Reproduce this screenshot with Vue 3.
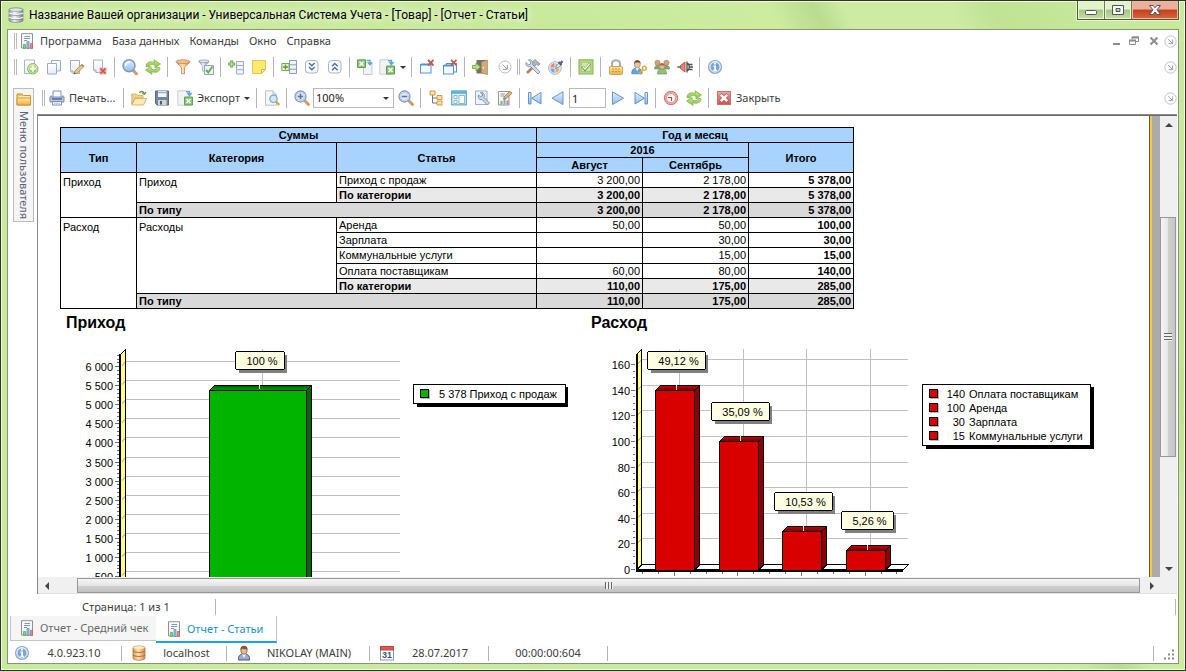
<script setup>
import { ref } from 'vue'

const menu = ['Программа', 'База данных', 'Команды', 'Окно', 'Справка']

const mainTools = [
  'add', 'copy', 'edit', 'delete', '|', 'search', 'refresh', '|', 'funnel', 'funnelCheck', '|',
  'addField', 'note', '|', 'expand', 'down', 'up', '|', 'excel', 'export+', '|',
  'closeWin', 'closeAll', '|', 'exit', 'more', '||', 'tools', 'palette', '|', 'check', '|',
  'lock', 'userKey', 'users', 'plug', '|', 'info'
]

const zoom = ref('100%')
const page = ref('1')

const rows = [
  { type: 'Приход', typeSpan: 3, cat: 'Приход', catSpan: 2, name: 'Приход с продаж', v: ['3 200,00', '2 178,00', '5 378,00'] },
  { sub: true, name: 'По категории', v: ['3 200,00', '2 178,00', '5 378,00'] },
  { total: true, name: 'По типу', v: ['3 200,00', '2 178,00', '5 378,00'] },
  { type: 'Расход', typeSpan: 6, cat: 'Расходы', catSpan: 5, name: 'Аренда', v: ['50,00', '50,00', '100,00'] },
  { name: 'Зарплата', v: ['', '30,00', '30,00'] },
  { tall: true, name: 'Коммунальные услуги', v: ['', '15,00', '15,00'] },
  { name: 'Оплата поставщикам', v: ['60,00', '80,00', '140,00'] },
  { sub: true, name: 'По категории', v: ['110,00', '175,00', '285,00'] },
  { total: true, name: 'По типу', v: ['110,00', '175,00', '285,00'] }
]

const half = (n) => Math.floor(n) + 0.5

const incomeTicks = Array.from({ length: 12 }, (_, i) => {
  const value = 6000 - i * 500
  return { y: half(32.6 + i * 19.08), label: value >= 1000 ? `${value / 1000 | 0} ${String(value % 1000).padStart(3, '0')}` : String(value) }
})
const incomeMinor = Array.from({ length: 60 }, (_, i) => half(21.2 + i * 3.816))

const expenseTicks = Array.from({ length: 9 }, (_, i) => ({ y: half(30.7 + i * 25.6), label: String(160 - i * 20) }))
const expenseMinor = Array.from({ length: 33 }, (_, i) => half(30.7 + i * 6.4))
const expenseBars = [
  { x: 70.5, y: 56.5, tagX: 62.5, tagY: 17.5, tagW: 58, label: '49,12 %' },
  { x: 134.5, y: 107.5, tagX: 126.5, tagY: 68.5, tagW: 58, label: '35,09 %' },
  { x: 197.5, y: 197.5, tagX: 189.5, tagY: 158.5, tagW: 58, label: '10,53 %' },
  { x: 261.5, y: 216.5, tagX: 256.5, tagY: 177.5, tagW: 52, label: '5,26 %' }
]
const floorTicks = Array.from({ length: 17 }, (_, i) => ({ x: half(57.5 + i * 15.9), major: i % 4 === 2 }))
const expenseLegend = [
  { value: '140', name: 'Оплата поставщикам' },
  { value: '100', name: 'Аренда' },
  { value: '30', name: 'Зарплата' },
  { value: '15', name: 'Коммунальные услуги' }
]
</script>

<template>
  <div class="window">
    <svg class="defs" width="0" height="0" aria-hidden="true">
      <defs>
        <linearGradient id="gGreen" x1="0" y1="0" x2="0" y2="1"><stop offset="0" stop-color="#c9e98c" /><stop offset="1" stop-color="#86c244" /></linearGradient>
        <linearGradient id="gBlue" x1="0" y1="0" x2="0" y2="1"><stop offset="0" stop-color="#e4f1fd" /><stop offset="1" stop-color="#8dbcec" /></linearGradient>
        <linearGradient id="gGold" x1="0" y1="0" x2="0" y2="1"><stop offset="0" stop-color="#ffe9a8" /><stop offset="1" stop-color="#eeb03c" /></linearGradient>
        <linearGradient id="gOrange" x1="0" y1="0" x2="1" y2="0"><stop offset="0" stop-color="#e9964c" /><stop offset=".45" stop-color="#ffe2bd" /><stop offset="1" stop-color="#dd8540" /></linearGradient>
        <linearGradient id="gPaper" x1="0" y1="0" x2="0" y2="1"><stop offset="0" stop-color="#ffffff" /><stop offset="1" stop-color="#e8edf4" /></linearGradient>
        <linearGradient id="gSteel" x1="0" y1="0" x2="1" y2="0"><stop offset="0" stop-color="#8b959c" /><stop offset=".4" stop-color="#f2f5f7" /><stop offset="1" stop-color="#737e86" /></linearGradient>
        <linearGradient id="gRed" x1="0" y1="0" x2="0" y2="1"><stop offset="0" stop-color="#f6a7a0" /><stop offset="1" stop-color="#d2514c" /></linearGradient>
        <linearGradient id="barGreenTop" x1="0" y1="0" x2="0" y2="1"><stop offset="0" stop-color="#006000" /><stop offset="1" stop-color="#00a000" /></linearGradient>
        <linearGradient id="barRedTop" x1="0" y1="0" x2="0" y2="1"><stop offset="0" stop-color="#d00000" /><stop offset="1" stop-color="#760000" /></linearGradient>
      </defs>
      <symbol id="i-db" viewBox="0 0 16 16">
        <path d="M1 2.500C1 .5 15 .5 15 2.500V13.500C15 16 1 16 1 13.500Z" fill="url(#gSteel)" stroke="#78838b" stroke-width=".7" />
        <ellipse cx="8" cy="2.700" rx="6.600" ry="1.700" fill="#dfe5e9" stroke="#8a959c" stroke-width=".6" />
        <path d="M1 6C3 7.800 13 7.800 15 6M1 10.200C3 12 13 12 15 10.200" fill="none" stroke="#fff" stroke-width="1.200" />
        <path d="M1 7C3 8.800 13 8.800 15 7M1 11.200C3 13 13 13 15 11.200" fill="none" stroke="#6f7a82" stroke-width=".7" />
      </symbol>
      <symbol id="i-report" viewBox="0 0 16 16">
        <path d="M2.500 .7H13.500V15H2.500Z" fill="url(#gPaper)" stroke="#8a9299" />
        <path d="M5.500 3.500H11M5 5.500H11M5 7.500H8" stroke="#8b959e" />
        <path d="M4.500 11.500H6.500V15.500H4.500Z" fill="#8dd065" stroke="#5fa53a" stroke-width=".7" />
        <path d="M8 8.500H10V15.500H8Z" fill="#8cc4f2" stroke="#4c8cc8" stroke-width=".7" />
        <path d="M11.500 10.500H13.500V15.500H11.500Z" fill="#f1897b" stroke="#c95a50" stroke-width=".7" />
      </symbol>
      <symbol id="i-add" viewBox="0 0 16 16">
        <path d="M1.500 1H11.500V14.500H1.500Z" fill="url(#gPaper)" stroke="#a8b5cb" />
        <circle cx="9.800" cy="9.800" r="5.200" fill="#e4f4cf" stroke="#7db357" />
        <circle cx="9.800" cy="9.800" r="4" fill="url(#gGreen)" />
        <path d="M9.800 6.800V12.800M6.800 9.800H12.800" stroke="#fff" stroke-width="2" />
      </symbol>
      <symbol id="i-copy" viewBox="0 0 16 16">
        <path d="M5.500 1.500H14.500V12H5.500Z" fill="url(#gPaper)" stroke="#9babd0" />
        <path d="M1.500 4.500H10.500V15H1.500Z" fill="url(#gPaper)" stroke="#9babd0" />
      </symbol>
      <symbol id="i-edit" viewBox="0 0 16 16">
        <path d="M1.500 1.500H10.500V14.500H4L1.500 12Z" fill="url(#gPaper)" stroke="#9dacd0" />
        <path d="M1.500 12H4V14.500" fill="#cdd7ee" stroke="#9dacd0" />
        <path d="M5 15L6 11.800L12.500 5.500L14.800 7.600L8.300 14Z" fill="#ecc684" stroke="#a8835a" stroke-width=".8" />
        <path d="M5 15L5.500 13.300L6.800 14.500Z" fill="#5b4a3b" />
        <path d="M12.500 5.500L14.800 7.600" stroke="#b8765c" stroke-width="1.500" />
      </symbol>
      <symbol id="i-delete" viewBox="0 0 16 16">
        <path d="M1.500 1H10.500V13.500H4L1.500 11Z" fill="url(#gPaper)" stroke="#a3b0cf" />
        <path d="M1.500 11H4V13.500" fill="#cdd7ee" stroke="#a3b0cf" />
        <rect x="7.500" y="8.500" width="7" height="7" fill="#f1aaa4" />
        <path d="M8.500 9.500L13.500 14.500M13.500 9.500L8.500 14.500" stroke="#cc514b" stroke-width="1.600" />
      </symbol>
      <symbol id="i-search" viewBox="0 0 16 16">
        <path d="M11 11L14.500 15" stroke="#d59a61" stroke-width="3" stroke-linecap="round" />
        <circle cx="7" cy="6.800" r="6" fill="url(#gBlue)" stroke="#7c99bb" stroke-width="1.500" />
        <path d="M3.500 7C3.500 4.500 5.500 3.200 7.500 3.300" stroke="#fff" stroke-width="1.500" fill="none" />
      </symbol>
      <symbol id="i-refresh" viewBox="0 0 16 16">
        <path d="M1 7.500C1 3 5.500 2 9.500 3.500L9 .8L15.500 5L10 8.800L9.800 6C7 4.800 4.500 5.200 4 8Z" fill="url(#gGreen)" stroke="#7fb443" stroke-width=".8" />
        <path d="M15 8.800C15 13 10.500 14 6.500 12.700L7 15.300L.5 11L6 7.500L6.300 10.200C9 11.300 11.500 10.800 12 8.300Z" fill="url(#gGreen)" stroke="#7fb443" stroke-width=".8" />
      </symbol>
      <symbol id="i-funnel" viewBox="0 0 16 16">
        <path d="M1.200 2.500C1.200 4.500 6.500 7 6.500 9V14.500L9.500 15V9C9.500 7 14.800 4.500 14.800 2.500Z" fill="url(#gOrange)" stroke="#c68650" stroke-width=".8" />
        <ellipse cx="8" cy="2.700" rx="6.800" ry="1.900" fill="#f6c089" stroke="#c68650" stroke-width=".8" />
      </symbol>
      <symbol id="i-funnelCheck" viewBox="0 0 16 16">
        <path d="M.8 2C1 4 4.500 5.500 4.500 7.500V12L7 12.500V7.500C7 5.500 11 4 11 2Z" fill="url(#gSteel)" stroke="#98a2af" stroke-width=".7" />
        <ellipse cx="5.900" cy="2.300" rx="5.100" ry="1.400" fill="#e2e7ee" stroke="#8792a0" stroke-width=".7" />
        <path d="M6.500 6.500H15.500V15.500H6.500Z" fill="#edf3fc" stroke="#8fa5cc" />
        <path d="M8 11L10.300 13.500L14.500 7.500" fill="none" stroke="#63b13f" stroke-width="1.900" />
      </symbol>
      <symbol id="i-addField" viewBox="0 0 16 16">
        <path d="M8.500 2.500H15.500V15H8.500ZM8.500 6.500H15.500M8.500 10.700H15.500" fill="#f1f4fb" stroke="#9eabcb" />
        <path d="M3.700 1.500V8.500M.3 5H7.200" stroke="#6aa945" stroke-width="3" /><path d="M3.700 2.500V7.500M1.200 5H6.200" stroke="#c5e5a5" />
      </symbol>
      <symbol id="i-note" viewBox="0 0 16 16">
        <path d="M1.500 1.500H14.500V10.500L10.500 14.500H1.500Z" fill="#ffe96f" stroke="#e6c650" /><path d="M14.500 10.500H10.500V14.500Z" fill="#fff8cc" stroke="#e0bb3a" />
      </symbol>
      <symbol id="i-expand" viewBox="0 0 16 16">
        <path d="M8.500 1.500H15.500V14.500H8.500ZM8.500 5.800H15.500M8.500 10.200H15.500" fill="#f1f4fb" stroke="#8b9ac4" />
        <path d="M.8 4.500H8V11.500H.8Z" fill="#e9f5d9" stroke="#72a852" /><path d="M2 8H7M4.500 5.500V10.500" stroke="#5a9c33" stroke-width="1.400" />
      </symbol>
      <symbol id="i-down" viewBox="0 0 16 16">
        <rect x="1.500" y="1.500" width="12.500" height="12.500" rx="3" fill="#f9fbff" stroke="#a6b4cd" />
        <path d="M5 4L7.800 6.800L10.600 4M5 8L7.800 10.800L10.600 8" fill="none" stroke="#566d9c" stroke-width="1.400" />
      </symbol>
      <symbol id="i-up" viewBox="0 0 16 16">
        <rect x="1.500" y="1.500" width="12.500" height="12.500" rx="3" fill="#f9fbff" stroke="#a6b4cd" />
        <path d="M5 7.200L7.800 4.400L10.600 7.200M5 11.200L7.800 8.400L10.600 11.200" fill="none" stroke="#566d9c" stroke-width="1.400" />
      </symbol>
      <symbol id="i-excel" viewBox="0 0 16 16">
        <path d="M6.500 3.500H15V15.500H6.500Z" fill="#f1f3f5" stroke="#c5cbd1" />
        <path d="M.5 .8H8.500V8.500H.5Z" fill="#8cc573" stroke="#5fa055" /><path d="M2.500 2.700L6.500 6.700M6.500 2.700L2.500 6.700" stroke="#fff" stroke-width="1.500" />
        <path d="M9.500 1.500H13V5M11 3.500L13 5.700L15 3.500" stroke="#5fa3d8" stroke-width="1.300" fill="none" />
      </symbol>
      <symbol id="i-export" viewBox="0 0 16 16">
        <path d="M.8 .8H8.500L12 4V15.200H.8Z" fill="#f1f3f5" stroke="#c8ced4" />
        <path d="M9 1.500H12.500V4M10.500 3L12.500 5.500L14.700 3" stroke="#5fa3d8" stroke-width="1.400" fill="none" />
        <path d="M7.500 7H15.500V15H7.500Z" fill="#8cc573" stroke="#5fa055" /><path d="M9.500 9L13.500 13M13.500 9L9.500 13" stroke="#fff" stroke-width="1.500" />
      </symbol>
      <symbol id="i-closeWin" viewBox="0 0 16 16">
        <rect x="1.500" y="5.500" width="10.500" height="8.500" fill="#f4f9ff" stroke="#4f97d2" /><path d="M2 5.500H12" stroke="#4f97d2" stroke-width="2" />
        <path d="M9 1L14.500 6.500M14.500 1L9 6.500" stroke="#c05b4d" stroke-width="1.800" />
      </symbol>
      <symbol id="i-closeAll" viewBox="0 0 16 16">
        <rect x="4.500" y="4.500" width="10" height="8.500" fill="#f4f9ff" stroke="#4f97d2" />
        <rect x="1.500" y="6.500" width="10" height="8.500" fill="#f4f9ff" stroke="#4f97d2" /><path d="M2 6.500H12" stroke="#4f97d2" stroke-width="2" />
        <path d="M9 .8L14.500 6.300M14.500 .8L9 6.300" stroke="#c05b4d" stroke-width="1.800" />
      </symbol>
      <symbol id="i-exit" viewBox="0 0 16 16">
        <path d="M4.500 1H14V14.500H4.500Z" fill="#74716b" /><path d="M9.500 3L15.500 1V15.500L9.500 14Z" fill="#cfab78" stroke="#ad8757" stroke-width=".7" />
        <circle cx="11.300" cy="8.800" r=".8" fill="#fff" />
        <path d="M.5 6.500H4V4L8.500 8L4 12V9.500H.5Z" fill="#b5e472" stroke="#6aa53d" stroke-width=".8" />
      </symbol>
      <symbol id="i-more" viewBox="0 0 16 16">
        <circle cx="8" cy="8" r="6" fill="#fff" stroke="#bdbdbd" /><path d="M5.500 5.500L10 10M10.300 5.800V10.300H6" stroke="#9a9a9a" fill="none" />
      </symbol>
      <symbol id="i-tools" viewBox="0 0 16 16">
        <path d="M9 7L2 14" stroke="#b78560" stroke-width="2.600" />
        <path d="M6.500 3.800L10 .8L15 5L13.500 6.500L11.500 5L9.500 7.500L7.500 5.500Z" fill="#aeb9c6" stroke="#6d7b8d" stroke-width=".8" />
        <path d="M1 3.500L3.300 5.700L5.500 5.200L5.800 3L3.500 .9C6.500 0 8.500 3 7.500 5.300L15 13L13 15L5.500 7.500C3 8.500 .3 6.500 1 3.500Z" fill="#d5deea" stroke="#6d7f9c" stroke-width=".8" />
      </symbol>
      <symbol id="i-palette" viewBox="0 0 16 16">
        <circle cx="7" cy="9" r="6.300" fill="#eef2f8" stroke="#9fb0cc" />
        <path d="M6.500 4V8.500H2.300C2.500 6 4 4.500 6.500 4Z" fill="#ee8477" /><path d="M7.500 9.500H11.700C11.500 12 9.500 13.700 7.500 14Z" fill="#edac5c" /><path d="M2.300 9.500H6.500V14C4 13.500 2.500 12 2.300 9.500Z" fill="#73a7e2" /><path d="M7.500 4V8.500H11Z" fill="#8bc55c" />
        <path d="M7.500 9.500L8.500 6.500L12 3L14 5L10.500 8.500Z" fill="#dbe7f6" stroke="#667a9d" stroke-width=".8" /><path d="M10.500 3L13.500 6M12.500 4.500L14.500 2" stroke="#59637b" stroke-width="2.200" />
      </symbol>
      <symbol id="i-check" viewBox="0 0 16 16">
        <rect x="1" y=".8" width="14" height="14.200" fill="#b2d87a" stroke="#86b258" /><rect x="3.500" y="3.300" width="9" height="9" fill="#cfe7a8" stroke="#9cc66b" stroke-width=".7" />
        <path d="M4.500 7.500L7 10.500L12 4.500" fill="none" stroke="#6b8a52" stroke-width="2.600" /><path d="M4.800 7.600L7 10L11.800 4.600" fill="none" stroke="#fff" stroke-width="1.300" />
      </symbol>
      <symbol id="i-lock" viewBox="0 0 16 16">
        <path d="M4 8V5C4 0 12 0 12 5V8" fill="none" stroke="#a9afb4" stroke-width="2.200" /><rect x="1.500" y="7.500" width="13" height="8" rx="1" fill="url(#gGold)" stroke="#d9a650" />
        <path d="M4 10H6M7 10H9M10 10H12M4 12.500H6M7 12.500H9M10 12.500H12" stroke="#c48d49" stroke-width="1.200" />
      </symbol>
      <symbol id="i-userKey" viewBox="0 0 16 16">
        <path d="M.8 14.800C.5 10 3.500 9 6 9C8.500 9 11 10 11 14.800Z" fill="#62a5dc" stroke="#3f7cb3" stroke-width=".7" /><path d="M4.500 9H8L6.300 12Z" fill="#fff" />
        <ellipse cx="6.300" cy="5.200" rx="3" ry="3.800" fill="#ecc29a" stroke="#a47a58" stroke-width=".6" /><path d="M3 5C2.500 .5 9.500 -.5 9.600 4.500L8.500 3.500H4.300Z" fill="#5c4c46" />
        <circle cx="13.300" cy="9.200" r="1.900" fill="none" stroke="#e6a737" stroke-width="1.400" /><path d="M12 10.500L8.500 14L10 15.200M10.300 12.300L11.700 13.500" stroke="#e6a737" stroke-width="1.400" fill="none" />
      </symbol>
      <symbol id="i-users" viewBox="0 0 16 16">
        <circle cx="3.500" cy="3.800" r="2.600" fill="#d9a077" stroke="#ad8266" stroke-width=".7" /><circle cx="12.500" cy="3.800" r="2.600" fill="#d9a077" stroke="#ad8266" stroke-width=".7" />
        <path d="M.5 10C.5 7 2 6.500 4 6.500H12C14 6.500 15.500 7 15.500 10Z" fill="#7da668" stroke="#6f9860" stroke-width=".7" />
        <path d="M3.500 15C3.500 11 5 10 8 10C11 10 12.500 11 12.500 15Z" fill="#8dc277" stroke="#6f9860" stroke-width=".7" /><circle cx="8" cy="7.300" r="2.900" fill="#e6b78e" stroke="#ad8266" stroke-width=".7" /><path d="M5.200 6.500C6 3.500 10 3.500 10.800 6.500Z" fill="#a06d4e" />
      </symbol>
      <symbol id="i-plug" viewBox="0 0 16 16">
        <path d="M.3 8H4" stroke="#5c5c5c" stroke-width="1.500" /><path d="M3.500 6.500L8 3V13L3.500 9.500Z" fill="#e98274" stroke="#b4483e" stroke-width=".9" />
        <path d="M10 2.500V13.500M10 4.500C13 4.500 13 11.500 10 11.500M12.500 5.500H15.500M12.500 8H16M12.500 10.500H15.500" fill="none" stroke="#4e4e50" stroke-width="1.300" />
      </symbol>
      <symbol id="i-info" viewBox="0 0 16 16">
        <circle cx="8" cy="8" r="6.500" fill="url(#gBlue)" stroke="#94a7c5" stroke-width="1.200" /><circle cx="8" cy="8" r="5" fill="#79a4de" stroke="#fff" stroke-width=".8" />
        <path d="M7 3.800H9V5.400H7ZM6.300 6.600H9V10.800H10V12H6.200V10.800H7.200V7.800H6.300Z" fill="#fff" />
      </symbol>
      <symbol id="i-print" viewBox="0 0 16 16">
        <path d="M4 1H12V7H4Z" fill="#fff" stroke="#7d90b8" /><path d="M1 7C1 6 2 6 3 6V8H13V6C14 6 15 6 15 7V12H1Z" fill="#b7c7e4" stroke="#7289b6" />
        <path d="M3 9H13" stroke="#5b6d94" stroke-width="1.500" /><path d="M3.500 11.500H12.500V15H3.500Z" fill="#f6f9fd" stroke="#7d90b8" /><path d="M5 13.200H11" stroke="#b1bdd6" />
      </symbol>
      <symbol id="i-open" viewBox="0 0 16 16">
        <path d="M.8 4H5.500L7 5.500H12V8H4L.8 14Z" fill="#f3d289" stroke="#d0a55b" stroke-width=".8" /><path d="M.8 15L4 8.500H15.500L12.500 15Z" fill="#ffeab6" stroke="#d0a55b" stroke-width=".8" />
        <path d="M8.500 3C9.500 1 12 1 13 3M11.300 3.200L13.500 4.300L14.800 2" fill="none" stroke="#5a9c33" stroke-width="1.300" />
      </symbol>
      <symbol id="i-save" viewBox="0 0 16 16">
        <path d="M1.500 1H14.500V15H3L1.500 13.500Z" fill="#74869a" stroke="#5b6a7c" /><path d="M4 1H12.500V7H4Z" fill="#f4f7fa" /><path d="M4 2.500H12.500" stroke="#9bb0c8" stroke-width="1.500" /><path d="M4 10H12.500V15H4Z" fill="#ccd6df" /><path d="M6 11H8V14.500H6Z" fill="#4e5d6f" />
      </symbol>
      <symbol id="i-preview" viewBox="0 0 16 16">
        <path d="M1.500 .8H9L12.500 4.300V15.200H1.500Z" fill="#f4f5f7" stroke="#c0c4c9" /><path d="M9 .8V4.300H12.500" fill="#e3e5e8" stroke="#c0c4c9" />
        <path d="M12 11.500L15.300 15" stroke="#dda13b" stroke-width="2.400" /><circle cx="9.500" cy="8.800" r="3.700" fill="#d1eaf9" stroke="#7ba7c9" stroke-width="1.200" />
      </symbol>
      <symbol id="i-zoomIn" viewBox="0 0 16 16">
        <path d="M10.500 10.500L14.500 14.500" stroke="#d59a61" stroke-width="3" stroke-linecap="round" /><circle cx="6.500" cy="6.500" r="5.500" fill="#e2ecfb" stroke="#859dc7" stroke-width="1.300" /><circle cx="6.500" cy="6.500" r="4" fill="none" stroke="#a9bce0" stroke-width=".7" /><path d="M6.500 3.800V9.200M3.800 6.500H9.200" stroke="#5674b0" stroke-width="1.600" />
      </symbol>
      <symbol id="i-zoomOut" viewBox="0 0 16 16">
        <path d="M10.500 10.500L14.500 14.500" stroke="#d59a61" stroke-width="3" stroke-linecap="round" /><circle cx="6.500" cy="6.500" r="5.500" fill="#e2ecfb" stroke="#859dc7" stroke-width="1.300" /><circle cx="6.500" cy="6.500" r="4" fill="none" stroke="#a9bce0" stroke-width=".7" /><path d="M3.800 6.500H9.200" stroke="#5674b0" stroke-width="1.600" />
      </symbol>
      <symbol id="i-tree" viewBox="0 0 16 16">
        <path d="M4.500 5V13H9M4.500 8H9" fill="none" stroke="#6f7680" /><path d="M2 1H7V5H2ZM9 5.500H14V9.500H9ZM9 11H14V15H9Z" fill="#ffe1a2" stroke="#cf9747" />
      </symbol>
      <symbol id="i-panels" viewBox="0 0 16 16">
        <rect x=".7" y=".9" width="14.600" height="14" fill="#dff0fb" stroke="#3f9bc5" /><path d="M1 2.500H15" stroke="#58b0d8" stroke-width="2.500" /><path d="M3 5.500H6V8.500H3ZM3 10.500H6V13.500H3ZM8 5.500H13.500V13.500H8Z" fill="#fff" stroke="#7ba9c4" stroke-width=".8" />
      </symbol>
      <symbol id="i-pageSetup" viewBox="0 0 16 16">
        <path d="M1.500 1H13V14.500H1.500Z" fill="#eff3fa" stroke="#9eacc8" />
        <path d="M4.500 5L6.500 6.800L8.300 6L8.300 4L6.500 2.700C9 2 11.500 4.500 10 7.500L15.500 13L13.500 15L8 9.500C5.500 10.300 3.500 7.800 4.500 5Z" fill="#cbd8ea" stroke="#6d82a6" stroke-width=".9" />
      </symbol>
      <symbol id="i-reportEdit" viewBox="0 0 16 16">
        <path d="M1.500 1.500H12V15H1.500Z" fill="url(#gPaper)" stroke="#8e959c" /><path d="M3.500 4H8M3.500 6H7" stroke="#8b959e" />
        <path d="M3.500 11H5.500V14.500H3.500Z" fill="#72c147" /><path d="M6.500 9H8.500V14.500H6.500Z" fill="#6aaeea" /><path d="M9.500 10.500H11.500V14.500H9.500Z" fill="#ec7a70" />
        <path d="M6.500 9L7.500 6.300L13 1.200L15 3.200L9.300 8.300Z" fill="#e7b968" stroke="#8e6a49" stroke-width=".8" />
      </symbol>
      <symbol id="i-first" viewBox="0 0 16 16"><path d="M1.500 2.500H4V14H1.500Z M14 2.500V14L4.500 8.200Z" fill="url(#gBlue)" stroke="#6795cc" /></symbol>
      <symbol id="i-prev" viewBox="0 0 16 16"><path d="M13 1.800V14.500L2 8.200Z" fill="url(#gBlue)" stroke="#6795cc" /></symbol>
      <symbol id="i-next" viewBox="0 0 16 16"><path d="M2.500 1.800V14.500L13.500 8.200Z" fill="url(#gBlue)" stroke="#6795cc" /></symbol>
      <symbol id="i-last" viewBox="0 0 16 16"><path d="M12 2.500H14.500V14H12Z M2 2.500V14L11.500 8.200Z" fill="url(#gBlue)" stroke="#6795cc" /></symbol>
      <symbol id="i-clock" viewBox="0 0 16 16">
        <circle cx="8" cy="8" r="6.700" fill="#f0a9a5" stroke="#d1716e" /><circle cx="8" cy="8" r="4.500" fill="#fff" stroke="#d98a86" stroke-width=".8" /><path d="M5 7.500H8.500V11" fill="none" stroke="#a04b4b" stroke-width="1.200" />
      </symbol>
      <symbol id="i-close" viewBox="0 0 16 16">
        <rect x="1.500" y="1.500" width="13" height="13" fill="url(#gRed)" stroke="#c27270" /><path d="M4.500 4.500L11.500 11.500M11.500 4.500L4.500 11.500" stroke="#b35957" stroke-width="4" /><path d="M4.800 4.800L11.200 11.200M11.200 4.800L4.800 11.200" stroke="#fff" stroke-width="2.600" />
      </symbol>
      <symbol id="i-folder" viewBox="0 0 16 16">
        <path d="M1 3H6L7.500 4.500H14.500V14H1Z" fill="#f7c552" stroke="#d09434" /><path d="M1 7H14.500V14H1Z" fill="url(#gGold)" stroke="#d09434" /><path d="M2 5.800H14" stroke="#fff3cf" />
      </symbol>
      <symbol id="i-goldDb" viewBox="0 0 16 16">
        <path d="M2 2.500C3.500 .5 12.500 .5 14 2.500V13.500C12.500 15.800 3.500 15.800 2 13.500Z" fill="url(#gOrange)" stroke="#b57a33" stroke-width=".8" /><ellipse cx="8" cy="2.600" rx="5.800" ry="1.500" fill="#ffe9bd" /><path d="M2 6.200C4 7.800 12 7.800 14 6.200M2 10.200C4 11.800 12 11.800 14 10.200" fill="none" stroke="#a3702d" stroke-width="1" />
      </symbol>
      <symbol id="i-user" viewBox="0 0 16 16">
        <path d="M2.500 15C2 10 5 9 8 9C11 9 14 10 13.500 15Z" fill="#98aecb" stroke="#4b5b73" /><path d="M6 9H10L8 13Z" fill="#fff" /><ellipse cx="8" cy="5.300" rx="3.200" ry="4" fill="#e8bb91" stroke="#82583c" stroke-width=".8" /><path d="M4.500 5C3.500 0 11 -.8 11.500 3.500C11.500 5 11 5 10.700 4C9 4.500 6.500 4 6 3.500Z" fill="#8a5331" />
      </symbol>
    </svg>

    <header class="titlebar">
      <svg class="ico"><use href="#i-db" /></svg>
      <h1>Название Вашей организации - Универсальная Система Учета - [Товар] - [Отчет - Статьи]</h1>
      <div class="winbtns">
        <button class="wb" aria-label="Свернуть"><svg width="14" height="12"><rect x="1.500" y="6.500" width="11" height="4" rx="1" fill="#fff" stroke="#50555f" /></svg></button>
        <button class="wb" aria-label="Развернуть"><svg width="14" height="12"><path fill-rule="evenodd" d="M1.500 1.500H12.500V10.500H1.500ZM5 4.500V7.500H9V4.500Z" fill="#fff" stroke="#50555f" /></svg></button>
        <button class="wb wb-close" aria-label="Закрыть окно"><svg width="14" height="12"><path d="M1.500 1.500H5L7 3.800L9 1.500H12.500L9 5.800L12.500 10.500H9L7 8L5 10.500H1.500L5 5.800Z" fill="#fff" stroke="#50555f" /></svg></button>
      </div>
    </header>

    <div class="client">
      <nav class="menubar">
        <span class="grip"></span>
        <svg class="ico"><use href="#i-report" /></svg>
        <button v-for="m in menu" :key="m" class="menu-item">{{ m }}</button>
        <span class="spring"></span>
        <button class="mdi" aria-label="Свернуть отчет"><svg width="10" height="10"><path d="M1 8H8" stroke="#8c8c8c" stroke-width="2" /></svg></button>
        <button class="mdi" aria-label="Восстановить отчет"><svg width="12" height="10"><path d="M4 3.500V1H10.500V5.500H8M1.500 4.500H7.500V8.500H1.500Z" fill="none" stroke="#8c8c8c" /><path d="M4 1.500H11M1 4.500H8" stroke="#8c8c8c" stroke-width="2" /></svg></button>
        <button class="mdi" aria-label="Закрыть отчет"><svg width="10" height="10"><path d="M1.500 1.500L8.500 8.500M8.500 1.500L1.500 8.500" stroke="#8c8c8c" stroke-width="2" /></svg></button>
        <button class="tail" aria-label="Настройка меню"><svg class="ico"><use href="#i-more" /></svg></button>
      </nav>

      <div class="toolbar main-tools">
        <span class="grip"></span>
        <template v-for="(t, i) in mainTools" :key="i">
          <span v-if="t === '|'" class="sep"></span>
          <span v-else-if="t === '||'" class="grip inner"></span>
          <button v-else-if="t === 'export+'" class="tool drop" aria-label="export"><svg class="ico"><use href="#i-export" /></svg><i class="caret"></i></button>
          <button v-else class="tool" :class="{ wide: t === 'more' }" :aria-label="t"><svg class="ico"><use :href="'#i-' + t" /></svg></button>
        </template>
        <span class="spring"></span>
        <button class="tail" aria-label="Настройка панели"><svg class="ico"><use href="#i-more" /></svg></button>
      </div>

      <div class="body">
        <aside class="dock">
          <button class="dock-tab"><svg class="ico"><use href="#i-folder" /></svg><span>Меню пользователя</span></button>
        </aside>

        <main class="main">
          <div class="toolbar view-tools">
            <span class="grip"></span>
            <button class="tool label print"><svg class="ico"><use href="#i-print" /></svg>Печать...</button>
            <span class="sep"></span>
            <button class="tool" aria-label="Открыть"><svg class="ico"><use href="#i-open" /></svg></button>
            <button class="tool" aria-label="Сохранить"><svg class="ico"><use href="#i-save" /></svg></button>
            <button class="tool label exp"><svg class="ico"><use href="#i-export" /></svg>Экспорт<i class="caret"></i></button>
            <span class="sep"></span>
            <button class="tool" aria-label="Просмотр"><svg class="ico"><use href="#i-preview" /></svg></button>
            <span class="sep"></span>
            <button class="tool" aria-label="Увеличить"><svg class="ico"><use href="#i-zoomIn" /></svg></button>
            <span class="combo">
              <select v-model="zoom" aria-label="Масштаб"><option>100%</option><option>50%</option></select>
              <i class="caret"></i>
            </span>
            <button class="tool" aria-label="Уменьшить"><svg class="ico"><use href="#i-zoomOut" /></svg></button>
            <span class="sep"></span>
            <button class="tool" aria-label="Структура"><svg class="ico"><use href="#i-tree" /></svg></button>
            <button class="tool" aria-label="Миниатюры"><svg class="ico"><use href="#i-panels" /></svg></button>
            <button class="tool" aria-label="Параметры страницы"><svg class="ico"><use href="#i-pageSetup" /></svg></button>
            <button class="tool" aria-label="Редактировать"><svg class="ico"><use href="#i-reportEdit" /></svg></button>
            <span class="sep"></span>
            <button class="tool" aria-label="Первая"><svg class="ico"><use href="#i-first" /></svg></button>
            <button class="tool" aria-label="Предыдущая"><svg class="ico"><use href="#i-prev" /></svg></button>
            <input v-model="page" class="page-no" type="text" aria-label="Номер страницы">
            <button class="tool" aria-label="Следующая"><svg class="ico"><use href="#i-next" /></svg></button>
            <button class="tool" aria-label="Последняя"><svg class="ico"><use href="#i-last" /></svg></button>
            <span class="sep"></span>
            <button class="tool" aria-label="Таймер"><svg class="ico"><use href="#i-clock" /></svg></button>
            <button class="tool" aria-label="Обновить"><svg class="ico"><use href="#i-refresh" /></svg></button>
            <span class="sep"></span>
            <button class="tool label"><svg class="ico"><use href="#i-close" /></svg>Закрыть</button>
            <span class="spring"></span>
            <button class="tail" aria-label="Настройка просмотра"><svg class="ico"><use href="#i-more" /></svg></button>
          </div>

          <div class="viewer">
            <div class="sheet-area">
              <div class="sheet">
                <table>
                  <colgroup><col class="c-type"><col class="c-name"><col class="c-name"><col class="c-num"><col class="c-num"><col class="c-total"></colgroup>
                  <thead>
                    <tr><th colspan="3">Суммы</th><th colspan="3">Год и месяц</th></tr>
                    <tr><th rowspan="2">Тип</th><th rowspan="2">Категория</th><th rowspan="2">Статья</th><th colspan="2">2016</th><th rowspan="2">Итого</th></tr>
                    <tr><th>Август</th><th>Сентябрь</th></tr>
                  </thead>
                  <tbody>
                    <tr v-for="(r, i) in rows" :key="i" :class="{ sub: r.sub, total: r.total, tall: r.tall }">
                      <td v-if="r.type" class="group" :rowspan="r.typeSpan">{{ r.type }}</td>
                      <td v-if="r.cat" class="group" :rowspan="r.catSpan">{{ r.cat }}</td>
                      <td class="name" :colspan="r.total ? 2 : 1">{{ r.name }}</td>
                      <td v-for="(v, k) in r.v" :key="k" class="num">{{ v }}</td>
                    </tr>
                  </tbody>
                </table>

                <div class="charts">
                  <section class="chart">
                    <h2>Приход</h2>
                    <svg width="525" height="270" class="plot">
                      <path v-for="t in incomeTicks" :key="'g' + t.y" :d="`M65 ${t.y - 5}H340`" stroke="#c0c0c0" />
                      <path d="M202.500 15V52" stroke="#c0c0c0" />
                      <path d="M60.500 20.500L65.500 15.500V270H60.500Z" fill="#ffff80" />
                      <path v-for="t in incomeTicks" :key="'d' + t.y" :d="`M62 ${t.y - 1}L65 ${t.y - 4}`" stroke="#c0c0c0" />
                      <path d="M60.500 20.500L65.500 15.500V270" fill="none" stroke="#000" />
                      <path d="M60 20V270" stroke="#000" stroke-width="2" />
                      <path v-for="y in incomeMinor" :key="'m' + y" :d="`M57 ${y}H59`" stroke="#707070" />
                      <g v-for="t in incomeTicks" :key="t.label">
                        <path :d="`M55 ${t.y}H59`" stroke="#707070" />
                        <text x="53" :y="t.y + 4" text-anchor="end">{{ t.label }}</text>
                      </g>
                      <path d="M149.500 56.500L154.500 51.500H251.500L246.500 56.500Z" fill="url(#barGreenTop)" stroke="#000" />
                      <path d="M246.500 56.500L251.500 51.500V270H246.500Z" fill="#006a00" stroke="#000" />
                      <path d="M149.500 56.500H246.500V270H149.500Z" fill="#00b400" stroke="#000" />
                      <path d="M199.500 46V55" stroke="#fff" />
                      <rect x="179" y="21" width="48" height="18" fill="#808080" />
                      <rect x="175.500" y="17.500" width="49" height="18" rx="2" fill="#ffffe1" stroke="#000" />
                      <text x="202" y="31" text-anchor="middle">100 %</text>
                      <rect x="357" y="53" width="151" height="20" />
                      <rect x="353.500" y="50.500" width="152" height="19" rx="1" fill="#fff" stroke="#000" />
                      <rect x="361" y="56" width="9" height="9" fill="#b5b5b5" />
                      <rect x="360.500" y="55.500" width="8" height="8" fill="#00b400" stroke="#000" />
                      <text x="379" y="64">5 378 Приход с продаж</text>
                    </svg>
                  </section>

                  <section class="chart">
                    <h2>Расход</h2>
                    <svg width="525" height="270" class="plot">
                      <path v-for="t in expenseTicks.slice(0, 8)" :key="'g' + t.y" :d="`M56 ${t.y - 5}H323`" stroke="#c0c0c0" />
                      <path d="M94.500 15V230M158.500 15V230M221.500 15V230M285.500 15V230" stroke="#c0c0c0" />
                      <path d="M51.500 20.500L56.500 15.500V230.500L51.500 235.500Z" fill="#ffff80" />
                      <path v-for="t in expenseTicks.slice(0, 8)" :key="'d' + t.y" :d="`M53 ${t.y - 1}L56 ${t.y - 4}`" stroke="#c0c0c0" />
                      <path d="M51.500 20.500L56.500 15.500V230.500L51.500 235.500" fill="none" stroke="#000" />
                      <path d="M52.500 235.500L57.500 230.500H323.500L318.500 235.500Z" fill="#fff" stroke="#000" />
                      <path d="M52 20V238" stroke="#000" stroke-width="2" />
                      <path d="M52 236.500H318" stroke="#000" stroke-width="3" />
                      <path v-for="y in expenseMinor" :key="'m' + y" :d="`M48 ${y}H50`" stroke="#707070" />
                      <path v-for="t in floorTicks" :key="'f' + t.x" :d="`M${t.x} 238V${t.major ? 242 : 240}`" stroke="#707070" />
                      <g v-for="t in expenseTicks" :key="t.label">
                        <path :d="`M46 ${t.y}H50`" stroke="#707070" />
                        <text x="45" :y="t.y + 4" text-anchor="end">{{ t.label }}</text>
                      </g>
                      <g v-for="b in expenseBars" :key="b.label">
                        <path :d="`M${b.x} ${b.y}l5 -5h39l-5 5Z`" fill="url(#barRedTop)" stroke="#000" />
                        <path :d="`M${b.x + 39} ${b.y}l5 -5V231l-5 5Z`" fill="#8e0000" stroke="#000" />
                        <path :d="`M${b.x} ${b.y}h39V236h-39Z`" fill="#d90000" stroke="#000" />
                        <path :d="`M${b.x + 21} ${b.y - 6}v5`" stroke="#fff" />
                        <rect :x="b.tagX + 3.500" :y="b.tagY + 3.500" :width="b.tagW - 1" height="18" fill="#808080" />
                        <rect :x="b.tagX" :y="b.tagY" :width="b.tagW" height="18" rx="2" fill="#ffffe1" stroke="#000" />
                        <text :x="b.tagX + b.tagW / 2 + 2" :y="b.tagY + 13.500" text-anchor="middle">{{ b.label }}</text>
                      </g>
                      <rect x="341" y="53" width="168" height="62" />
                      <rect x="337.500" y="50.500" width="168" height="61" rx="1" fill="#fff" stroke="#000" />
                      <g v-for="(l, i) in expenseLegend" :key="l.name">
                        <rect x="345" :y="56 + i * 14" width="9" height="9" fill="#b5b5b5" />
                        <rect x="344.500" :y="55.500 + i * 14" width="8" height="8" fill="#d90000" stroke="#000" />
                        <text x="380" :y="64 + i * 14" text-anchor="end">{{ l.value }}</text>
                        <text x="384" :y="64 + i * 14">{{ l.name }}</text>
                      </g>
                    </svg>
                  </section>
                </div>
              </div>
              <div class="vscroll">
                <button class="sb" aria-label="Вверх"><i class="arr up"></i></button>
                <div class="vtrack-top"></div>
                <div class="vthumb"><i></i></div>
                <div class="vtrack-bottom"></div>
                <button class="sb" aria-label="Вниз"><i class="arr dn"></i></button>
              </div>
            </div>
            <div class="hscroll">
              <button class="sb" aria-label="Влево"><i class="arr lf"></i></button>
              <div class="hthumb"><i></i></div>
              <button class="sb" aria-label="Вправо"><i class="arr rt"></i></button>
              <span class="corner"></span>
            </div>
          </div>

          <div class="pagebar"><span>Страница: 1 из 1</span></div>
        </main>
      </div>

      <div class="tabs">
        <button class="tab"><svg class="ico"><use href="#i-report" /></svg>Отчет - Средний чек</button>
        <button class="tab active"><svg class="ico"><use href="#i-report" /></svg>Отчет - Статьи</button>
      </div>

      <footer class="status">
        <span class="st s1"><svg class="ico"><use href="#i-info" /></svg><b>4.0.923.10</b></span>
        <span class="st s2"><svg class="ico"><use href="#i-goldDb" /></svg><b>localhost</b></span>
        <span class="st s3"><svg class="ico"><use href="#i-user" /></svg><b>NIKOLAY (MAIN)</b></span>
        <span class="st s4">
          <svg class="ico" viewBox="0 0 16 16">
            <rect x="1.500" y="1.500" width="13" height="13.500" fill="#fff" stroke="#8598b8" /><path d="M1.500 1.500H14.500V5H1.500Z" fill="#dc5a4c" stroke="#b9463c" />
            <text x="8" y="13" text-anchor="middle" class="cal-num">31</text>
          </svg>
          <b>28.07.2017</b>
        </span>
        <span class="st s5"><b>00:00:00:604</b></span>
        <span class="st rest"></span>
        <svg class="resize" width="12" height="12"><path d="M9 1.500H11M5 5.500H7M9 5.500H11M1 9.500H3M5 9.500H7M9 9.500H11" stroke="#8a8a8a" stroke-width="2" /></svg>
      </footer>
    </div>
  </div>
</template>

<style>
body { background: #c9ea9c; }
</style>

<style scoped>
* { box-sizing: border-box; }
button, input, select { font: inherit; color: inherit; margin: 0; }
button { border: 0; padding: 0; background: none; }
svg { display: block; flex: none; }
.defs { position: absolute; }
.ico { width: 16px; height: 16px; }
.cal-num { font: bold 9px "Liberation Sans", sans-serif; fill: #3f5878; }
.window {
  height: 100vh; display: flex; flex-direction: column; padding: 0 6px 6px 6px; border: 1px solid #2e3328;
  box-shadow: inset 0 0 0 1px #f0fadf; overflow: hidden;
  background: linear-gradient(65deg, #c9ea9c 0 60%, #cdec9f 72%, #b9dc8e 75%, #cdeca2 77%, #cdeca2 84%, #bfe293 87%, #c9ea9c 95%);
  font: 11px/14px "Noto Sans", "Open Sans", sans-serif; color: #3c3c3c;
}
.titlebar { flex: none; height: 28px; display: flex; align-items: center; gap: 5px; padding-left: 1px; }
.titlebar h1 { margin: 0; flex: 1; font: 12px/18px Roboto, sans-serif; color: #000; white-space: nowrap; text-shadow: 0 0 6px #f4fce6, 0 0 10px #f4fce6; }
.winbtns { align-self: flex-start; display: flex; height: 19px; border: 1px solid #4c5741; border-top: 0; box-shadow: 0 0 0 1px #e7f6d0; }
.wb { width: 27px; display: flex; align-items: center; justify-content: center; border-right: 1px solid #6d7a5d; background: linear-gradient(#e2f3cb 0 45%, #a9c385 50%, #c4df9e); box-shadow: inset 0 0 0 1px #e9f7d6; }
.wb-close { width: 46px; border-right: 0; background: linear-gradient(#eab09c 0 45%, #c4401d 50%, #d9663c); box-shadow: inset 0 0 0 1px #efb8a4; }
.client { flex: 1; min-height: 0; display: flex; flex-direction: column; background: #fff; border: 1px solid #87967a; }
.menubar { flex: none; display: flex; align-items: center; height: 22px; padding-left: 6px; }
.grip { width: 3px; height: 16px; border: solid #b9b9b9; border-width: 0 1px; margin-right: 2px; flex: none; }
.grip.inner { margin: 0 1px; }
.menu-item { margin-left: 10px; white-space: nowrap; }
.menubar .ico + .menu-item { margin-left: 5px; }
.spring { flex: 1; }
.mdi { margin-right: 9px; }
.mdi:nth-last-child(2) { margin-right: 4px; }
.mdi:nth-last-child(4) { margin-right: 6px; }
.tail .ico { width: 15px; height: 15px; }
.toolbar { flex: none; display: flex; align-items: center; }
.main-tools { height: 30px; padding-left: 6px; }
.tool { width: 23px; height: 23px; display: flex; align-items: center; justify-content: center; flex: none; }
.tool.wide { width: 25px; padding-left: 2px; }
.tool.drop { width: 32px; gap: 5px; }
.tool.label { width: auto; gap: 4px; padding: 0 4px; white-space: nowrap; }
.tool.print { width: 75px; justify-content: flex-start; }
.tool.exp { width: 80px; justify-content: flex-start; }
.caret { width: 0; height: 0; border: 3px solid transparent; border-top-color: #333; border-bottom: 0; }
.sep { width: 7px; height: 20px; flex: none; background: linear-gradient(90deg, transparent 3px, #b5b5b5 3px 4px, transparent 4px); }
.body { flex: 1; min-height: 0; display: flex; }
.dock { flex: none; width: 29px; padding: 6px 0 0 5px; }
.dock-tab { width: 21px; height: 134px; border: 1px solid #bcbcbc; background: #f5f5f5; display: flex; flex-direction: column; align-items: center; gap: 4px; padding-top: 2px; color: #5d6075; }
.dock-tab span { writing-mode: vertical-rl; white-space: nowrap; line-height: 14px; }
.main { flex: 1; min-width: 0; display: flex; flex-direction: column; }
.view-tools { height: 32px; padding-left: 5px; }
.view-tools > .grip { margin-right: 0; }
.combo { width: 81px; height: 20px; border: 1px solid #b9b9b9; display: flex; align-items: center; padding-right: 4px; }
.combo select { appearance: none; flex: 1; min-width: 0; height: 18px; border: 0; background: transparent; padding: 0 2px; color: #222; }
.page-no { width: 37px; height: 20px; border: 1px solid #b9b9b9; padding: 0 2px; color: #222; background: #fff; }
.viewer { flex: 1; min-height: 0; display: flex; flex-direction: column; border: solid #8a8a8a; border-width: 1px 0 0 1px; box-shadow: inset 0 1px 0 #696969; margin-right: 1px; }
.sheet-area { flex: 1; min-height: 0; display: flex; background: #ababab; margin-top: 1px; }
.sheet { flex: 1; min-width: 0; overflow: hidden; background: #fff; border-right: 1px solid #5f5a4b; box-shadow: 2px 0 0 #ffc82e; margin-right: 10px; padding: 11px 0 0 22px; font-family: "Liberation Sans", Arial, sans-serif; color: #000; }
table { width: 794px; table-layout: fixed; border-collapse: separate; border-spacing: 0; border: solid #000; border-width: 1px 0 0 1px; font-size: 11px; line-height: 14px; }
.c-type { width: 76px; } .c-name { width: 200px; } .c-num { width: 106px; } .c-total { width: 105px; }
tr { height: 15px; }
tr.tall { height: 16px; }
th, td { padding: 0 2px; border: solid #000; border-width: 0 1px 1px 0; white-space: nowrap; overflow: hidden; }
th { background: #a8d3ff; }
td { text-align: left; vertical-align: top; }
td.group { padding-top: 2px; }
td.num { text-align: right; }
td.num:last-child, .sub .name, .sub .num, .total .name, .total .num { font-weight: bold; }
.sub .name, .sub .num { background: #e9e9e9; }
.total .name, .total .num { background: #d9d9d9; }
.charts { display: flex; }
.chart { flex: none; width: 525px; }
.chart h2 { margin: 0; padding: 4px 0 0 6px; height: 25px; font: bold 16px/19px "Liberation Sans", Arial, sans-serif; }
.plot text { font: 11px "Liberation Sans", Arial, sans-serif; fill: #000; }
.plot { shape-rendering: crispEdges; }
.vscroll { flex: none; width: 17px; background: #f0f0f0; display: flex; flex-direction: column; }
.sb { width: 17px; height: 17px; flex: none; display: flex; align-items: center; justify-content: center; }
.arr { width: 0; height: 0; border: 4px solid transparent; }
.arr.up { border-bottom-color: #444; border-top: 0; }
.arr.dn { border-top-color: #444; border-bottom: 0; }
.arr.lf { border-right-color: #444; border-left: 0; }
.arr.rt { border-left-color: #444; border-right: 0; }
.vtrack-top { flex: 84; }
.vthumb { flex: 240; margin-right: 1px; border: 1px solid #979797; background: linear-gradient(90deg, #f5f5f5, #e6e6e6 50%, #cfcfcf 52%, #c6c6c6); display: flex; align-items: center; justify-content: center; }
.vthumb i { width: 8px; height: 8px; background: repeating-linear-gradient(#666 0 1px, #f0f0f0 1px 3px); }
.vtrack-bottom { flex: 103; }
.hscroll { flex: none; height: 17px; display: flex; background: #f0f0f0; border-bottom: 1px solid #e0e0e0; }
.hscroll .sb:first-child { margin-right: 22px; }
.hscroll .sb:nth-child(3) { margin-left: 3px; }
.hthumb { flex: 1; height: 15px; margin-top: 1px; border: 1px solid #979797; background: linear-gradient(#f5f5f5, #e6e6e6 50%, #cfcfcf 52%, #c2c2c2); display: flex; align-items: center; justify-content: center; }
.hthumb i { width: 8px; height: 7px; background: repeating-linear-gradient(90deg, #666 0 1px, #f0f0f0 1px 3px); }
.corner { width: 17px; }
.pagebar { flex: none; height: 22px; display: flex; align-items: center; padding: 4px 2px 0 0; }
.pagebar span { width: 179px; padding-left: 45px; line-height: 16px; border-right: 1px solid #b5b5b5; white-space: nowrap; }
.pagebar::after { content: ""; margin-left: auto; width: 1px; height: 16px; background: #b5b5b5; }
.tabs { flex: none; height: 27px; display: flex; align-items: flex-start; padding-left: 2px; }
.tab { height: 25px; width: 146px; display: flex; align-items: center; gap: 5px; padding-left: 8px; background: #f5f5f5; border: solid #c4c4c4; border-width: 0 0 1px 1px; color: #6a6a6a; white-space: nowrap; }
.tab.active { width: 121px; height: 27px; padding-left: 10px; background: #fff; color: #1592dc; border-width: 0 1px 2px 0; border-bottom-color: #17a3f0; }
.status { flex: none; height: 20px; display: flex; align-items: center; padding-left: 6px; }
.st { display: flex; align-items: center; height: 15px; border-right: 1px solid #b5b5b5; flex: none; white-space: nowrap; }
.st b { font-weight: normal; flex: 1; text-align: center; }
.s1 { width: 108px; padding-right: 3px; } .s2 { width: 105px; padding-left: 9px; } .s3 { width: 143px; padding: 0 3px 0 9px; } .s4 { width: 119px; padding: 0 3px 0 9px; } .s5 { width: 119px; }
.st.rest { flex: 1; }
.resize { margin: 4px 3px 0 9px; }
</style>
